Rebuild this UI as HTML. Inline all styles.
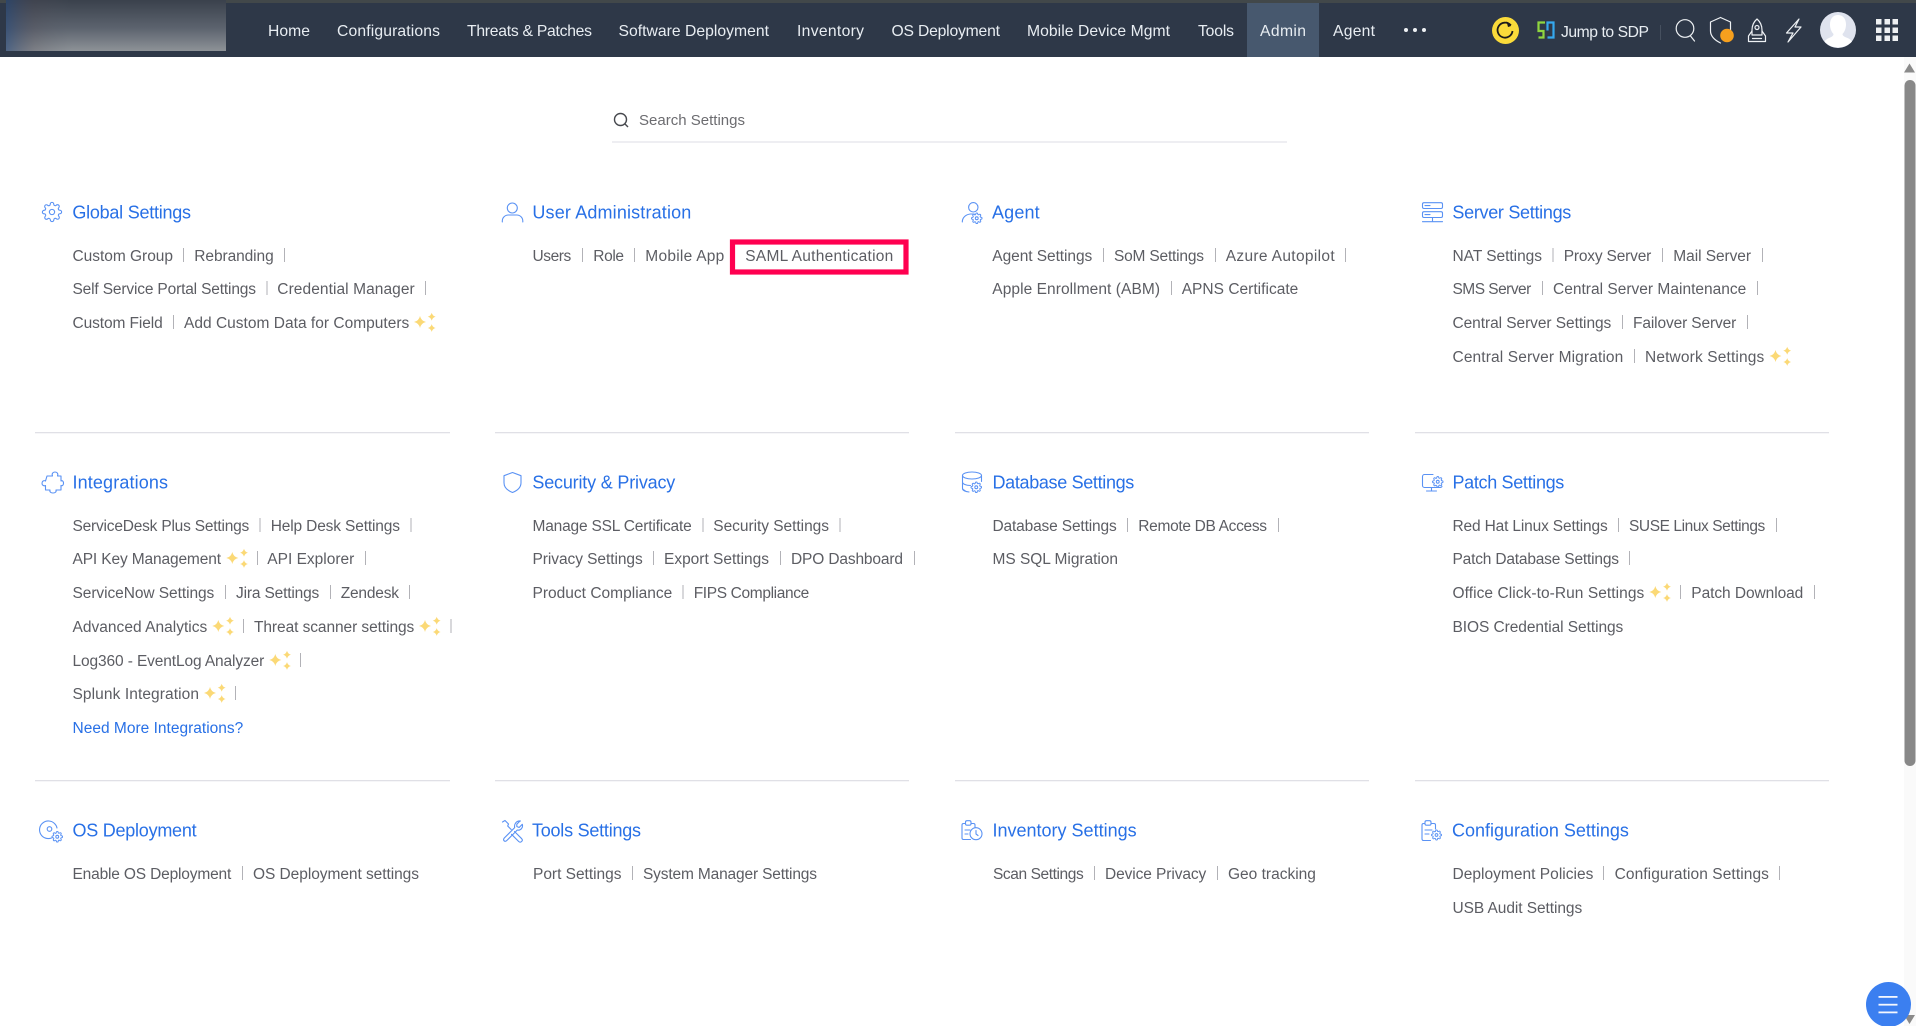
<!DOCTYPE html>
<html lang="en"><head><meta charset="utf-8"><title>Admin Settings</title>
<style>
html,body{margin:0;padding:0;width:1916px;height:1026px;overflow:hidden;background:#fff}
svg{position:absolute;left:0;top:0;display:block}
text{font-family:"Liberation Sans",Arial,sans-serif;white-space:pre}
.n text{font-size:15.7px;fill:#e8edf2}
.b text{font-size:15.5px;fill:#5c5d63}
.h text{font-size:18px;fill:#2870e6}
.i{fill:none;stroke:#5a92f4;stroke-width:1.1;stroke-linecap:round;stroke-linejoin:round}
</style></head><body>
<svg width="1916" height="1026" viewBox="0 0 1916 1026" xmlns="http://www.w3.org/2000/svg">
<defs>
<linearGradient id="lg" x1="0" y1="0" x2="0" y2="1"><stop offset="0" stop-color="#3a414c"/><stop offset=".55" stop-color="#5c636e"/><stop offset="1" stop-color="#8d9297"/></linearGradient>
<linearGradient id="lb" x1="0" y1="0" x2="1" y2="0"><stop offset="0" stop-color="#24477a" stop-opacity=".6"/><stop offset=".13" stop-color="#4f4a55" stop-opacity=".25"/><stop offset=".3" stop-color="#5a5f68" stop-opacity="0"/></linearGradient>
<symbol id="g" viewBox="0 0 24 24" overflow="visible"><path d="M12 15a3 3 0 1 0 0-6 3 3 0 0 0 0 6z"/><path d="M19.4 15a1.65 1.65 0 0 0 .33 1.82l.06.06a2 2 0 0 1 0 2.83 2 2 0 0 1-2.83 0l-.06-.06a1.65 1.65 0 0 0-1.82-.33 1.65 1.65 0 0 0-1 1.51V21a2 2 0 0 1-2 2 2 2 0 0 1-2-2v-.09A1.65 1.65 0 0 0 9 19.4a1.65 1.65 0 0 0-1.82.33l-.06.06a2 2 0 0 1-2.83 0 2 2 0 0 1 0-2.83l.06-.06a1.65 1.65 0 0 0 .33-1.82 1.65 1.65 0 0 0-1.51-1H3a2 2 0 0 1-2-2 2 2 0 0 1 2-2h.09A1.65 1.65 0 0 0 4.6 9a1.65 1.65 0 0 0-.33-1.82l-.06-.06a2 2 0 0 1 0-2.83 2 2 0 0 1 2.83 0l.06.06a1.65 1.65 0 0 0 1.82.33H9a1.65 1.65 0 0 0 1-1.51V3a2 2 0 0 1 2-2 2 2 0 0 1 2 2v.09a1.65 1.65 0 0 0 1 1.51 1.65 1.65 0 0 0 1.82-.33l.06-.06a2 2 0 0 1 2.83 0 2 2 0 0 1 0 2.83l-.06.06a1.65 1.65 0 0 0-.33 1.82V9a1.65 1.65 0 0 0 1.51 1H21a2 2 0 0 1 2 2 2 2 0 0 1-2 2h-.09a1.65 1.65 0 0 0-1.51 1z"/></symbol>
<g id="s" fill="#fbd976"><path d="M5 -12Q6.1 -7.1 11 -6Q6.1 -4.9 5 0Q3.900 -4.9 -1 -6Q3.900 -7.1 5 -12Z"/><path d="M16.7 -15.200Q17.500 -12.100 20.600 -11.300Q17.500 -10.500 16.700 -7.400Q15.900 -10.500 12.800 -11.300Q15.900 -12.100 16.700 -15.200Z"/><path d="M16.7 -3.900Q17.500 -.8 20.600 0Q17.500 .8 16.700 3.900Q15.900 .8 12.800 0Q15.900 -.8 16.700 -3.900Z"/></g>
</defs>

<!-- header -->
<rect width="1916" height="57" fill="#2e3848"/>
<rect width="1916" height="3" fill="#42484a"/>
<rect x="6" y="0" width="220" height="51" fill="url(#lg)"/>
<rect x="6" y="0" width="220" height="51" fill="url(#lb)"/>
<rect x="1247" y="3" width="72" height="54" fill="#47586e"/>
<g class="n">
<text x="268" y="36" textLength="42">Home</text>
<text x="337" y="36" textLength="103">Configurations</text>
<text x="467" y="36" textLength="125">Threats &amp; Patches</text>
<text x="618.5" y="36" textLength="150.5">Software Deployment</text>
<text x="797" y="36" textLength="67">Inventory</text>
<text x="891.5" y="36" textLength="108.5">OS Deployment</text>
<text x="1027" y="36" textLength="143">Mobile Device Mgmt</text>
<text x="1198" y="36" textLength="36">Tools</text>
<text x="1260" y="36" textLength="46">Admin</text>
<text x="1333" y="36" textLength="42">Agent</text>
<text x="1561" y="37" textLength="88">Jump to SDP</text>
</g>
<g fill="#eef1f4"><circle cx="1406" cy="30" r="2"/><circle cx="1415" cy="30" r="2"/><circle cx="1424" cy="30" r="2"/></g>
<circle cx="1505.5" cy="30.5" r="13.5" fill="#fadb3a"/>
<path d="M1510.5 25a7.500 7.500 0 1 0 2 6" fill="none" stroke="#1c1c1c" stroke-width="1.800"/>
<path d="M1506.500 21.500l5 3-1 1.800-2.500.7z" fill="#1c1c1c"/>
<path d="M1545 22.500h-6.500v8.500h5v6.500h-5" fill="none" stroke="#8fd63f" stroke-width="2.200"/>
<path d="M1547.500 37.500h6v-15h-6v8" fill="none" stroke="#35a8ee" stroke-width="2.200"/>
<rect x="1660" y="25" width="1" height="15" fill="#46505f"/>
<g fill="none" stroke="#eef1f4" stroke-width="1.200" stroke-linecap="round" stroke-linejoin="round">
<circle cx="1685" cy="28.500" r="8.800"/><path d="M1690.500 36l4 5"/>
<path d="M1720.500 17.500l10 4.500v10M1720.500 17.500l-10 4.500v9c0 5 4 9 10 12"/>
<path d="M1757 19c3.500 3 5 6.500 5 11v5h-10v-5c0-4.500 1.500-8 5-11z"/><circle cx="1757" cy="27.500" r="2"/><path d="M1752 31l-3.500 5v5.500h17V36l-3.500-5M1752.500 38.500h9"/>
<path d="M1799 19l-12.500 14h6.500l-5 9 13-15h-6z"/>
</g>
<circle cx="1727" cy="35.500" r="6.800" fill="#f7a01e"/>
<circle cx="1838" cy="30" r="18" fill="#dfe3ee"/>
<path d="M1838 15c5.500 0 8 4.500 8 9.500 0 4-1.500 7.500-3.500 9.500 0 2 2.500 3 5 4 2 .8 3.500 2 4.500 3.500-3 3.500-8 6-14 6s-10.500-2.500-13.500-6c1-1.500 2.500-2.700 4.500-3.500 2.500-1 4.500-2 4.500-4-2-2-3.500-5.500-3.500-9.500 0-5 2.500-9.500 8-9.500z" fill="#fff"/>
<g fill="#eef0f2"><rect x="1876" y="19" width="5.500" height="5.500"/><rect x="1884.500" y="19" width="5.500" height="5.500"/><rect x="1892.500" y="19" width="5.500" height="5.500"/><rect x="1876" y="27.500" width="5.500" height="5.500"/><rect x="1884.500" y="27.500" width="5.500" height="5.500"/><rect x="1892.500" y="27.500" width="5.500" height="5.500"/><rect x="1876" y="35.500" width="5.500" height="5.500"/><rect x="1884.500" y="35.500" width="5.500" height="5.500"/><rect x="1892.500" y="35.500" width="5.500" height="5.500"/></g>

<!-- search -->
<circle cx="620.500" cy="119.500" r="6" fill="none" stroke="#46484d" stroke-width="1.400"/>
<path d="M625 124l3 3" stroke="#46484d" stroke-width="1.400" fill="none"/>
<text x="639" y="125" font-size="15" fill="#6c6c70" textLength="106">Search Settings</text>
<rect x="612" y="141.500" width="675" height="1" fill="#dcdce4"/>

<!-- dividers -->
<g fill="#e0e0e6">
<rect x="35" y="432" width="415" height="1.300"/><rect x="495" y="432" width="414" height="1.300"/><rect x="955" y="432" width="414" height="1.300"/><rect x="1415" y="432" width="414" height="1.300"/>
<rect x="35" y="780" width="415" height="1.300"/><rect x="495" y="780" width="414" height="1.300"/><rect x="955" y="780" width="414" height="1.300"/><rect x="1415" y="780" width="414" height="1.300"/>
</g>

<!-- icons -->
<g class="i">
<use href="#g" x="41" y="201.500" width="22" height="21" stroke-width="1.250"/>
<circle cx="512.300" cy="208" r="5"/><path d="M502.300 222v-1a6 6 0 0 1 6-6h8.500a6 6 0 0 1 6 6v1"/>
<circle cx="973.300" cy="207.300" r="4.700"/><path d="M962.300 222c0-4.500 3.500-7.500 8-8h4"/><use href="#g" x="971" y="212.500" width="11.500" height="11.500" stroke-width="2.100"/>
<rect x="1422.500" y="202.700" width="20" height="5.800" rx="1.500"/><rect x="1422.500" y="211.700" width="20" height="5.800" rx="1.500"/><path d="M1425 205.600h5M1425 214.600h5M1432.500 217.500v4.200M1422.500 221.700h20"/>
<path d="M47 476h5.500c-1-2.500.5-4 2.500-4s3.500 1.500 2.500 4h3.500v5c1.500-.8 2.500.5 2.500 2.200s-1 3-2.500 2.300v4.500h-5c.6 2-1 3-3 3s-3.600-1-3-3h-4.500v-4.500c-1.700.8-3.500-.3-3.500-2.300s1.800-3.200 3.500-2.200z"/>
<path d="M512.500 472.500l8.500 3.200v7c0 4.800-3.500 7.800-8.500 9.800-5-2-8.500-5-8.500-9.800v-7z"/>
<ellipse cx="972" cy="475.500" rx="9.500" ry="3.500"/><path d="M962.500 475.500v13c0 2 3 3.300 6.500 3.500M981.500 475.500v6M962.500 482c0 2 3.500 3.500 8 3.500M962.500 488c0 1 1 2 2.500 2.500"/><use href="#g" x="970.500" y="481.500" width="11.500" height="11.500" stroke-width="2.100"/>
<path d="M1433 474.500h-8.500a2 2 0 0 0-2 2v9a2 2 0 0 0 2 2h16a2 2 0 0 0 1.500-1M1431.500 487.500v3.500M1426.500 491h10"/><use href="#g" x="1432" y="476" width="11.500" height="11.500" stroke-width="2.100"/>
<path d="M54.500 823.500a8.800 8.800 0 1 0-3 14.500M57 828a8.500 8.500 0 0 0-2.500-4.500"/><circle cx="49.500" cy="829" r="2.300"/><use href="#g" x="51.500" y="831" width="11.500" height="11.500" stroke-width="2.100"/>
<path d="M520 821l-3.200 3.200v2.300l2.300 1 3.200-3.200c1 3.200-1.500 6.500-5 5.700l-10.500 10.500c-2 2-4.300-.3-2.500-2.500l10.400-10.400c-.9-3.700 2-7.200 5.800-6.600z"/><path d="M502.500 822l2.500-1.500 3.500 3.500-.8 2 3.500 3.500M514.500 831.500l7.200 7.200c1.800 2-1 4.500-3 2.800l-7.200-7.200"/>
<path d="M971 823.500h2.500a1.500 1.500 0 0 1 1.500 1.500v2.500M965.500 823.500h-2a1.500 1.500 0 0 0-1.500 1.500v13a1.500 1.500 0 0 0 1.500 1.500h7"/><rect x="965.500" y="820.700" width="5.500" height="4.500" rx="1.500"/><path d="M965 830h5M965 834h3"/><circle cx="976" cy="833.700" r="6"/><path d="M976 830.500v3.500l2 1.500"/>
<path d="M1431 823.500h3a1.500 1.500 0 0 1 1.500 1.500v4M1425 823.500h-1.500a1.500 1.500 0 0 0-1.500 1.500v14a1.500 1.500 0 0 0 1.500 1.500h7"/><rect x="1425" y="820.700" width="6" height="4.500" rx="1.500"/><path d="M1425 830h7M1425 834h4"/><use href="#g" x="1431" y="829.500" width="11" height="11" stroke-width="2.100"/>
</g>

<!-- headings -->
<g class="h">
<text x="72.400" y="218.500" textLength="118.600">Global Settings</text>
<text x="532.400" y="218.500" textLength="158.900">User Administration</text>
<text x="992" y="218.500" textLength="47.700">Agent</text>
<text x="1452.400" y="218.500" textLength="118.900">Server Settings</text>
<text x="72.500" y="488.500" textLength="95.500">Integrations</text>
<text x="532.400" y="488.500" textLength="142.900">Security &amp; Privacy</text>
<text x="992.500" y="488.500" textLength="141.800">Database Settings</text>
<text x="1452.500" y="488.500" textLength="111.800">Patch Settings</text>
<text x="72.500" y="836.500" textLength="124.100">OS Deployment</text>
<text x="532" y="836.500" textLength="109">Tools Settings</text>
<text x="992.500" y="836.500" textLength="144.100">Inventory Settings</text>
<text x="1452" y="836.500" textLength="176.900">Configuration Settings</text>
</g>

<!-- links -->
<g class="b">
<text x="72.500" y="261" textLength="100.500">Custom Group</text>
<text x="194.300" y="261" textLength="79.400">Rebranding</text>
<text x="72.500" y="294" textLength="183.500">Self Service Portal Settings</text>
<text x="277.300" y="294" textLength="137.400">Credential Manager</text>
<text x="72.500" y="328" textLength="90.200">Custom Field</text>
<text x="184" y="328" textLength="225.300">Add Custom Data for Computers</text>

<text x="532.500" y="261" textLength="38.800">Users</text>
<text x="593.300" y="261" textLength="30.700">Role</text>
<text x="645.300" y="261" textLength="79">Mobile App</text>
<text x="745.300" y="261" textLength="148">SAML Authentication</text>

<text x="992.300" y="261" textLength="100">Agent Settings</text>
<text x="1114" y="261" textLength="90">SoM Settings</text>
<text x="1225.700" y="261" textLength="109">Azure Autopilot</text>
<text x="992.300" y="294" textLength="167.700">Apple Enrollment (ABM)</text>
<text x="1181.700" y="294" textLength="116.600">APNS Certificate</text>

<text x="1452.500" y="261" textLength="89.500">NAT Settings</text>
<text x="1563.700" y="261" textLength="87.600">Proxy Server</text>
<text x="1673.300" y="261" textLength="77.700">Mail Server</text>
<text x="1452.500" y="294" textLength="78.800">SMS Server</text>
<text x="1553" y="294" textLength="193.300">Central Server Maintenance</text>
<text x="1452.500" y="328" textLength="158.800">Central Server Settings</text>
<text x="1633" y="328" textLength="103.300">Failover Server</text>
<text x="1452.500" y="362" textLength="170.800">Central Server Migration</text>
<text x="1645" y="362" textLength="119.300">Network Settings</text>

<text x="72.500" y="531" textLength="176.800">ServiceDesk Plus Settings</text>
<text x="270.700" y="531" textLength="129.300">Help Desk Settings</text>
<text x="72.500" y="564" textLength="148.500">API Key Management</text>
<text x="267.300" y="564" textLength="87">API Explorer</text>
<text x="72.500" y="598" textLength="141.800">ServiceNow Settings</text>
<text x="236" y="598" textLength="83.300">Jira Settings</text>
<text x="340.700" y="598" textLength="58.300">Zendesk</text>
<text x="72.500" y="632" textLength="134.800">Advanced Analytics</text>
<text x="254" y="632" textLength="160.300">Threat scanner settings</text>
<text x="72.500" y="666" textLength="191.800">Log360 - EventLog Analyzer</text>
<text x="72.500" y="699" textLength="126.500">Splunk Integration</text>
<text x="72.500" y="733" textLength="170.800" style="fill:#2870e6">Need More Integrations?</text>

<text x="532.500" y="531" textLength="159.200">Manage SSL Certificate</text>
<text x="713.300" y="531" textLength="115.700">Security Settings</text>
<text x="532.500" y="564" textLength="110.200">Privacy Settings</text>
<text x="664" y="564" textLength="105">Export Settings</text>
<text x="791" y="564" textLength="112">DPO Dashboard</text>
<text x="532.500" y="598" textLength="139.800">Product Compliance</text>
<text x="693.700" y="598" textLength="115.600">FIPS Compliance</text>

<text x="992.500" y="531" textLength="124.200">Database Settings</text>
<text x="1138.300" y="531" textLength="128.700">Remote DB Access</text>
<text x="992.500" y="564" textLength="125.500">MS SQL Migration</text>

<text x="1452.500" y="531" textLength="155.200">Red Hat Linux Settings</text>
<text x="1629" y="531" textLength="136.300">SUSE Linux Settings</text>
<text x="1452.500" y="564" textLength="166.500">Patch Database Settings</text>
<text x="1452.500" y="598" textLength="191.800">Office Click-to-Run Settings</text>
<text x="1691.300" y="598" textLength="112">Patch Download</text>
<text x="1452.500" y="632" textLength="170.800">BIOS Credential Settings</text>

<text x="72.500" y="879" textLength="158.800">Enable OS Deployment</text>
<text x="253" y="879" textLength="166">OS Deployment settings</text>
<text x="533" y="879" textLength="88.500">Port Settings</text>
<text x="643" y="879" textLength="174">System Manager Settings</text>
<text x="993" y="879" textLength="90.700">Scan Settings</text>
<text x="1105" y="879" textLength="101.300">Device Privacy</text>
<text x="1228" y="879" textLength="87.900">Geo tracking</text>
<text x="1452.500" y="879" textLength="140.900">Deployment Policies</text>
<text x="1614.600" y="879" textLength="154.300">Configuration Settings</text>
<text x="1452.500" y="913" textLength="129.700">USB Audit Settings</text>
</g>

<!-- separators -->
<path fill="none" stroke="#b2b2b7" stroke-width="1" d="M183.500 248v14M284.500 248v14M267 281v14M425.500 281v14M173.500 315v14
M582.500 248v14M634.500 248v14
M1103.500 248v14M1215.500 248v14M1345.500 248v14M1171.500 281v14
M1553 248v14M1662.500 248v14M1762.500 248v14M1542.500 281v14M1757.500 281v14M1622.500 315v14M1747.500 315v14M1634.500 349v14
M260 518v14M411 518v14M257.500 551v14M365.500 551v14M225.500 585v14M330.500 585v14M409.500 585v14M243.500 619v14M451 619v14M300.500 653v14M235.500 686v14
M703 518v14M840 518v14M653.500 551v14M780.500 551v14M914.500 551v14M683 585v14
M1127.500 518v14M1278.500 518v14
M1618.500 518v14M1776.500 518v14M1629.500 551v14M1680.500 585v14M1814.500 585v14
M242.500 866v14M632.500 866v14M1094.500 866v14M1217.500 866v14M1603.500 866v14M1779.500 866v14"/>

<!-- sparkles -->
<use href="#s" x="415" y="328"/>
<use href="#s" x="1770.500" y="362"/>
<use href="#s" x="227.300" y="564"/>
<use href="#s" x="213.300" y="632"/>
<use href="#s" x="420" y="632"/>
<use href="#s" x="270.300" y="666"/>
<use href="#s" x="205" y="699"/>
<use href="#s" x="1650.300" y="598"/>

<!-- highlight -->
<rect x="732.500" y="242" width="173.500" height="30" fill="none" stroke="#ff0050" stroke-width="5.200"/>

<!-- scrollbar -->
<rect x="1904" y="57" width="12" height="969" fill="#fafafa"/>
<path d="M1909.500 63.500l5.500 9h-11z" fill="#8a8a8a"/>
<rect x="1904.500" y="80" width="11" height="686" rx="5.500" fill="#888"/>
<path d="M1904 1015h11l-5.500 9z" fill="#8a8a8a"/>

<!-- fab -->
<circle cx="1888.500" cy="1004.500" r="22.500" fill="#3b7ff0"/>
<g fill="#f4f7fe"><rect x="1878.500" y="996" width="19" height="1.800"/><rect x="1878.500" y="1003.800" width="19" height="1.800"/><rect x="1878.500" y="1011.500" width="19" height="1.800"/></g>
</svg>
</body></html>
